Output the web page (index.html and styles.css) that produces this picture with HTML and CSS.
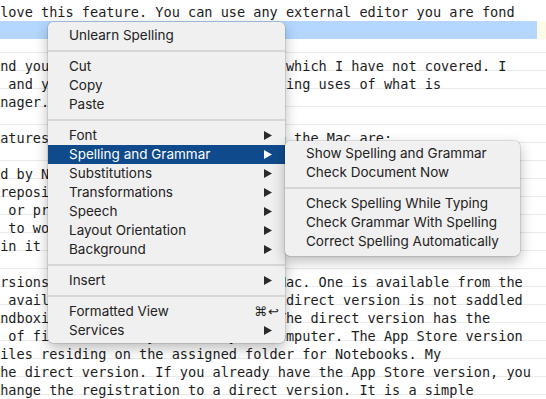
FILE: index.html
```html
<!DOCTYPE html>
<html lang="en">
<head>
    <meta charset="UTF-8">
    <title>Editor context menu</title>
    <link rel="stylesheet" href="styles.css">
</head>
<body>
    <!-- Text document behind the menus -->
    <div class="editor">
        <div class="line first"> love this feature. You can use any external editor you are fond</div>
        <div class="line sel"></div>
        <div class="line"></div>
        <div class="line">and you will find a few other items which I have not covered. I</div>
        <div class="line">s and you can explore other interesting uses of what is</div>
        <div class="line">anager.</div>
        <div class="line"></div>
        <div class="line">eatures of an app that are unique to the Mac are:</div>
        <div class="line"></div>
        <div class="line">ed by Neil, the developer of the app.</div>
        <div class="line"> repositories such as Dropbox.</div>
        <div class="line">s or prefer a local folder.</div>
        <div class="line">s to work with the files.</div>
        <div class="line"> in it more easily.</div>
        <div class="line"></div>
        <div class="line">ersions of Notebooks built for the Mac. One is available from the</div>
        <div class="line">s available from the App Store. The direct version is not saddled</div>
        <div class="line">andboxing limits of the App Store. The direct version has the</div>
        <div class="line">s of files saved anywhere on your computer. The App Store version</div>
        <div class="line">files residing on the assigned folder for Notebooks. My</div>
        <div class="line">the direct version. If you already have the App Store version, you</div>
        <div class="line">change the registration to a direct version. It is a simple</div>
    </div>

    <!-- Context menu -->
    <div class="menu main">
        <div class="item">Unlearn Spelling</div>
        <div class="sep"></div>
        <div class="item">Cut</div>
        <div class="item">Copy</div>
        <div class="item">Paste</div>
        <div class="sep"></div>
        <div class="item">Font <svg class="arrow" viewBox="0 0 8 9"><polygon points="0,0 8,4.5 0,9"/></svg></div>
        <div class="item active">Spelling and Grammar <svg class="arrow" viewBox="0 0 8 9"><polygon points="0,0 8,4.5 0,9"/></svg></div>
        <div class="item">Substitutions <svg class="arrow" viewBox="0 0 8 9"><polygon points="0,0 8,4.5 0,9"/></svg></div>
        <div class="item">Transformations <svg class="arrow" viewBox="0 0 8 9"><polygon points="0,0 8,4.5 0,9"/></svg></div>
        <div class="item">Speech <svg class="arrow" viewBox="0 0 8 9"><polygon points="0,0 8,4.5 0,9"/></svg></div>
        <div class="item">Layout Orientation <svg class="arrow" viewBox="0 0 8 9"><polygon points="0,0 8,4.5 0,9"/></svg></div>
        <div class="item">Background <svg class="arrow" viewBox="0 0 8 9"><polygon points="0,0 8,4.5 0,9"/></svg></div>
        <div class="sep"></div>
        <div class="item">Insert <svg class="arrow" viewBox="0 0 8 9"><polygon points="0,0 8,4.5 0,9"/></svg></div>
        <div class="sep"></div>
        <div class="item shortcut-row">Formatted View <span class="shortcut">⌘↩</span></div>
        <div class="item">Services <svg class="arrow" viewBox="0 0 8 9"><polygon points="0,0 8,4.5 0,9"/></svg></div>
    </div>

    <!-- Spelling and Grammar submenu -->
    <div class="menu sub">
        <div class="item">Show Spelling and Grammar</div>
        <div class="item">Check Document Now</div>
        <div class="sep"></div>
        <div class="item">Check Spelling While Typing</div>
        <div class="item">Check Grammar With Spelling</div>
        <div class="item">Correct Spelling Automatically</div>
    </div>
</body>
</html>
```

FILE: styles.css
```css
body {
    margin: 0;
    width: 546px;
    height: 399px;
    overflow: hidden;
    position: relative;
    background-color: #fff;
}
.editor {
    padding-top: 3px;
    margin-left: -8px;
    font-family: "DejaVu Sans Mono", monospace;
    font-size: 13.57px;
    line-height: 18px;
    color: #1c1c1c;
}
.line {
    height: 18px;
    white-space: pre;
    background: linear-gradient(#eaeaea, #eaeaea) 0 13px / 100% 1px no-repeat;
}
.line.first {
    background: none;
}
.line.sel {
    background: linear-gradient(to right, #b4d7ff 545px, #fdfbe8 545px);
}
.menu {
    position: absolute;
    background-color: #f0f0f0;
    border-radius: 5px;
    box-shadow: 0 0 0 0.5px rgba(0, 0, 0, 0.2), 0 5px 14px rgba(0, 0, 0, 0.28);
    font-family: Inter, "Liberation Sans", sans-serif;
    font-size: 13.5px;
    color: #222;
}
.main {
    left: 48px;
    top: 22px;
    width: 237px;
    padding: 4px 0 3px;
}
.sub {
    left: 285px;
    top: 141px;
    width: 235px;
    padding: 3px 0 5px;
}
.item {
    height: 19px;
    line-height: 19px;
    padding: 0 13px 0 21px;
    display: flex;
    justify-content: space-between;
    align-items: center;
}
.item.active {
    background-color: #0f4b8c;
    color: #fff;
}
.item.shortcut-row {
    padding-right: 5px;
}
.arrow {
    width: 8px;
    height: 9px;
    fill: #2a2a2a;
}
.active .arrow {
    fill: #fff;
}
.shortcut {
    font-family: "DejaVu Sans", sans-serif;
    font-size: 13px;
    letter-spacing: 1px;
}
.sep {
    height: 2px;
    margin: 5px 0;
    background-color: #d6d6d6;
}
```
